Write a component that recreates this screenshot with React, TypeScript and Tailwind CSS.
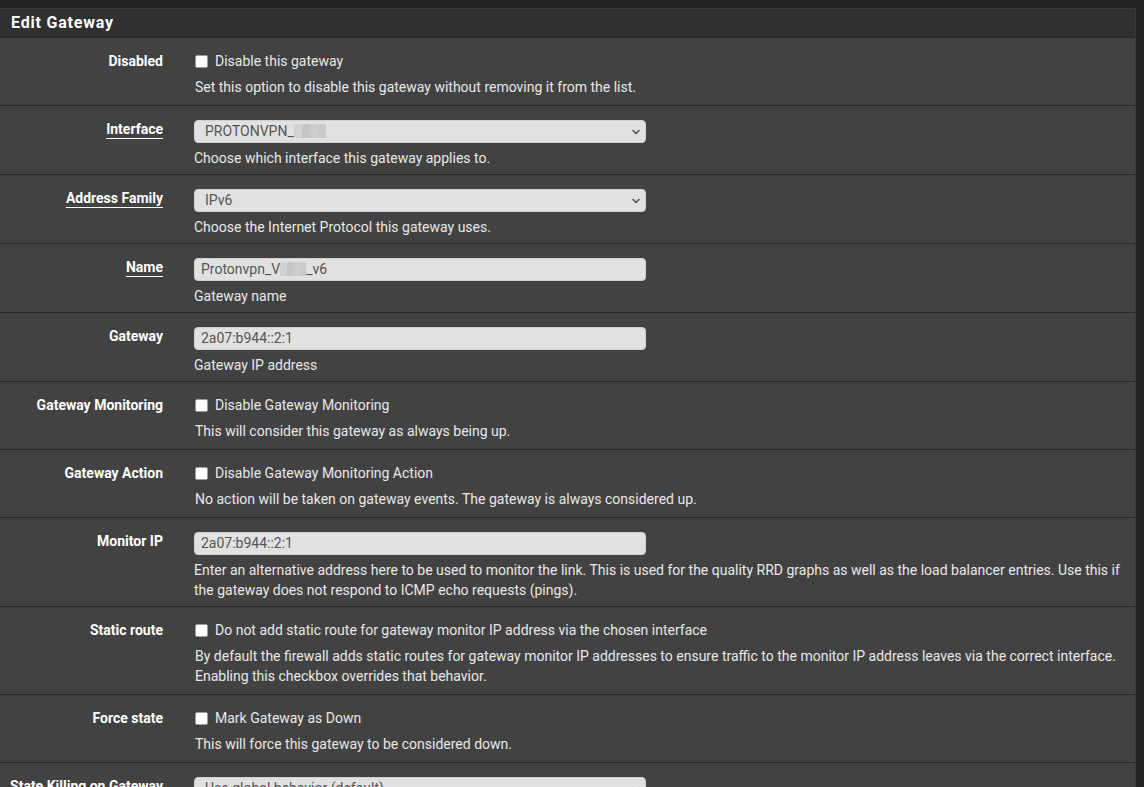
import { ChevronDown } from 'lucide-react';
import type { ReactNode } from 'react';

// ─── Bits ─────────────────────────────────────────────────────────────────────

function Blur({ w }: { w: number }) {
  // pixelated redaction block
  return (
    <span className="inline-flex align-middle h-[14px] -mt-[2px]" style={{ width: w }}>
      <span className="flex-1 bg-[#d2d2d2]" />
      <span className="flex-1 bg-[#c6c6c6]" />
      <span className="flex-1 bg-[#cdcdcd]" />
      <span className="flex-1 bg-[#c9c9c9]" />
    </span>
  );
}

function Checkbox() {
  return <span className="inline-block w-[13px] h-[13px] bg-white border border-[#9a9a9a] rounded-[2px] shrink-0" />;
}

function Select({ children }: { children: ReactNode }) {
  return (
    <div className="w-[452px] h-[23px] bg-[#e1e1e1] rounded-[4px] border border-[#cfcfcf] flex items-center pl-[10px] pr-[3px] text-[14px] text-[#555]">
      <span className="flex-1">{children}</span>
      <ChevronDown className="w-[12px] h-[12px] text-[#555]" strokeWidth={3.2} />
    </div>
  );
}

function Input({ children }: { children: ReactNode }) {
  return (
    <div className="w-[452px] h-[23px] bg-[#e1e1e1] rounded-[4px] border border-[#cfcfcf] flex items-center pl-[6px] text-[14px] text-[#555]">
      {children}
    </div>
  );
}

function Help({ children }: { children: ReactNode }) {
  return <p className="mt-[5px] text-[14px] leading-[20px] text-[#e8e8e8]">{children}</p>;
}

// ─── Rows ─────────────────────────────────────────────────────────────────────

function InputRow({ label, link, field, help }: { label: string; link?: boolean; field: ReactNode; help: ReactNode }) {
  return (
    <div className="grid grid-cols-[178px_1fr] pt-[14px] pb-[6px] border-b border-[#2a2a2a]">
      <div className="pr-[15px] text-right text-[14px] leading-[18px] font-bold text-white whitespace-nowrap">
        <span className={link ? 'underline underline-offset-[4px] decoration-1' : ''}>{label}</span>
      </div>
      <div className="pl-[16px] pr-[15px]">
        {field}
        <Help>{help}</Help>
      </div>
    </div>
  );
}

function CheckRow({ label, text, help }: { label: string; text: string; help: ReactNode }) {
  return (
    <div className="grid grid-cols-[178px_1fr] pt-[13px] pb-[8px] border-b border-[#2a2a2a]">
      <div className="pr-[15px] text-right text-[14px] leading-[20px] font-bold text-white">{label}</div>
      <div className="pl-[17px] pr-[15px]">
        <div className="h-[20px] flex items-center gap-[7px] text-[14px] text-[#e8e8e8]">
          <Checkbox />
          <span>{text}</span>
        </div>
        <p className="mt-[6px] text-[14px] leading-[20px] text-[#e8e8e8]">{help}</p>
      </div>
    </div>
  );
}

// ─── App ──────────────────────────────────────────────────────────────────────

export default function App() {
  return (
    <div className="h-[787px] overflow-hidden bg-[#222] pt-[8px] pr-[8px] font-['Roboto',sans-serif]">
      <div className="bg-[#424242] border-t border-r border-[#3a3a3a]">
        <div className="h-[29px] bg-[#303030] border-b border-[#2a2a2a] flex items-center pl-[11px]">
          <h2 className="text-[16px] font-bold text-white tracking-[0.8px]">Edit Gateway</h2>
        </div>

        <CheckRow
          label="Disabled"
          text="Disable this gateway"
          help="Set this option to disable this gateway without removing it from the list."
        />
        <InputRow
          label="Interface"
          link
          field={
            <Select>
              PROTONVPN_<Blur w={32} />
            </Select>
          }
          help="Choose which interface this gateway applies to."
        />
        <InputRow
          label="Address Family"
          link
          field={<Select>IPv6</Select>}
          help="Choose the Internet Protocol this gateway uses."
        />
        <InputRow
          label="Name"
          link
          field={
            <Input>
              Protonvpn_V<Blur w={26} />_v6
            </Input>
          }
          help="Gateway name"
        />
        <InputRow label="Gateway" field={<Input>2a07:b944::2:1</Input>} help="Gateway IP address" />
        <CheckRow
          label="Gateway Monitoring"
          text="Disable Gateway Monitoring"
          help="This will consider this gateway as always being up."
        />
        <CheckRow
          label="Gateway Action"
          text="Disable Gateway Monitoring Action"
          help="No action will be taken on gateway events. The gateway is always considered up."
        />
        <InputRow
          label="Monitor IP"
          field={<Input>2a07:b944::2:1</Input>}
          help="Enter an alternative address here to be used to monitor the link. This is used for the quality RRD graphs as well as the load balancer entries. Use this if the gateway does not respond to ICMP echo requests (pings)."
        />
        <CheckRow
          label="Static route"
          text="Do not add static route for gateway monitor IP address via the chosen interface"
          help="By default the firewall adds static routes for gateway monitor IP addresses to ensure traffic to the monitor IP address leaves via the correct interface. Enabling this checkbox overrides that behavior."
        />
        <CheckRow
          label="Force state"
          text="Mark Gateway as Down"
          help="This will force this gateway to be considered down."
        />
        <InputRow
          label="State Killing on Gateway"
          field={<Select>Use global behavior (default)</Select>}
          help="Controls the state killing behavior when this specific gateway goes down."
        />
      </div>
    </div>
  );
}
